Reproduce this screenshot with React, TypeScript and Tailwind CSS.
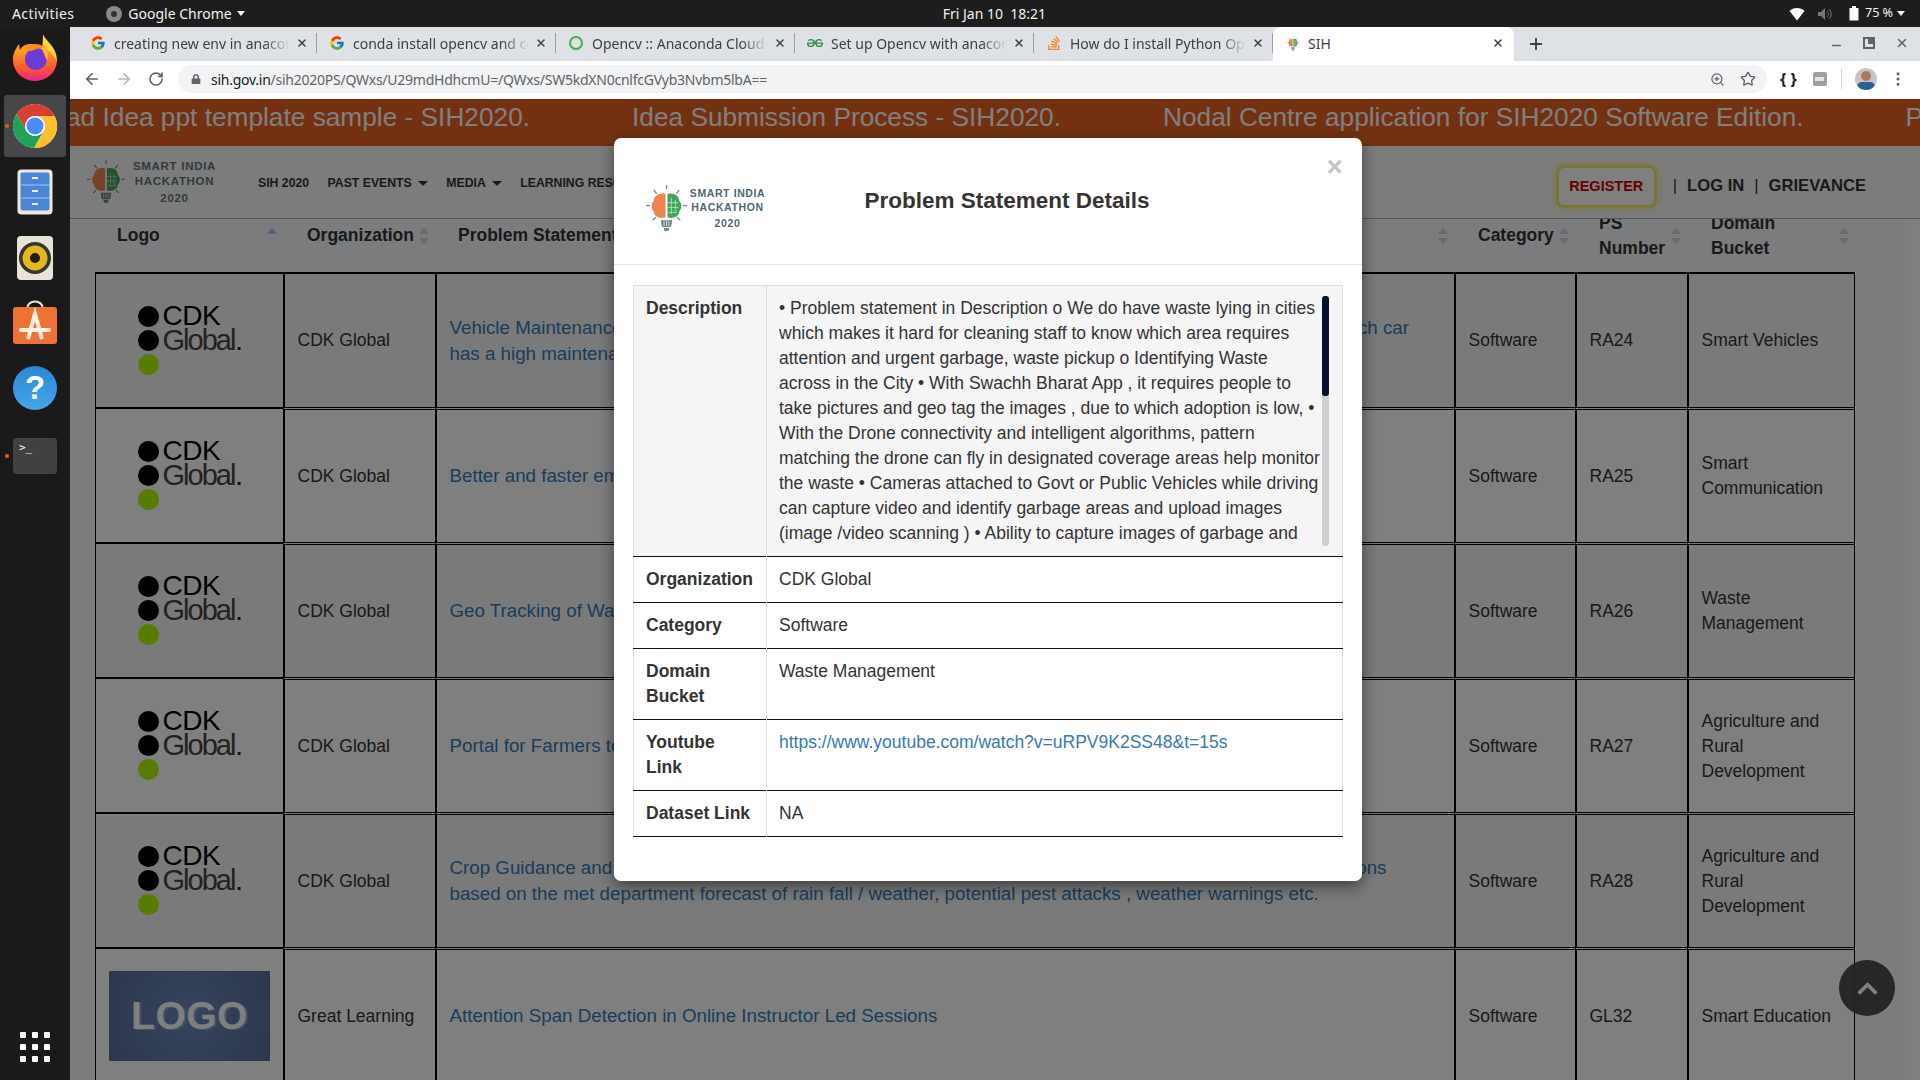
import { ArrowLeft, ArrowRight, EllipsisVertical, Minus, Plus, RotateCw, Star, X, ZoomIn } from "lucide-react";
import { FaChevronUp, FaLock, FaStackOverflow } from "react-icons/fa";
import { FcGoogle } from "react-icons/fc";
import { SiGeeksforgeeks } from "react-icons/si";

const sans = "font-['Liberation_Sans',Arial,sans-serif]";
const ui = "font-['Noto_Sans',sans-serif]";

const description =
  "• Problem statement in Description o We do have waste lying in cities which makes it hard for cleaning staff to know which area requires attention and urgent garbage, waste pickup o Identifying Waste across in the City • With Swachh Bharat App , it requires people to take pictures and geo tag the images , due to which adoption is low, • With the Drone connectivity and intelligent algorithms, pattern matching the drone can fly in designated coverage areas help monitor the waste • Cameras attached to Govt or Public Vehicles while driving can capture video and identify garbage areas and upload images (image /video scanning ) • Ability to capture images of garbage and send them to the municipal teams for a quick response.";

const rows = [
  {
    org: "CDK Global",
    title: ["Vehicle Maintenance is a costly affair and every vehicle owner wants to know well in advance of purchase which car", "has a high maintenance cost over the years"],
    ps: "RA24",
    domain: "Smart Vehicles",
  },
  { org: "CDK Global", title: ["Better and faster emergency response for road accidents"], ps: "RA25", domain: "Smart Communication" },
  { org: "CDK Global", title: ["Geo Tracking of Waste and triggering alerts"], ps: "RA26", domain: "Waste Management" },
  { org: "CDK Global", title: ["Portal for Farmers to sell their produce"], ps: "RA27", domain: "Agriculture and Rural Development" },
  {
    org: "CDK Global",
    title: ["Crop Guidance and advisory for farmers through the app that can send timely recommendations and notifications", "based on the met department forecast of rain fall / weather, potential pest attacks , weather warnings etc."],
    ps: "RA28",
    domain: "Agriculture and Rural Development",
  },
  { org: "Great Learning", title: ["Attention Span Detection in Online Instructor Led Sessions"], ps: "GL32", domain: "Smart Education", logo: true },
];

function Firefox() {
  return (
    <svg width="46" height="48" viewBox="0 0 46 48">
      <defs>
        <linearGradient id="ff" x1="0.5" y1="0.2" x2="0.5" y2="1">
          <stop offset="0" stopColor="#ff9a1f" />
          <stop offset="0.55" stopColor="#ff5a2b" />
          <stop offset="1" stopColor="#e8218f" />
        </linearGradient>
      </defs>
      <path d="M31 0c2 7 14 12 14 27H30z" fill="#ffd93b" />
      <path d="M1 25c0-6 3-11 6-15l1 6c2-4 6-6 10-6 6 0 20 3 27 17a22 21 0 0 1-44-2z" fill="url(#ff)" />
      <circle cx="24" cy="25" r="11" fill="#6d3bd6" />
      <path d="M12 14c5-5 17-6 22 1-5-2-9-1-12 1-4 2-7 1-10-2z" fill="#ff8a1e" />
      <path d="M31 9c4 4 6 10 4 18l-5-12z" fill="#ffb52e" />
    </svg>
  );
}

function Chrome({ size }: { size: number }) {
  const wedge = "M24 14H43.6A22 22 0 0 0 5.54 12.03L15.34 29A10 10 0 0 1 24 14Z";
  return (
    <svg width={size} height={size} viewBox="0 0 48 48">
      <circle cx="24" cy="24" r="22" fill="#fff" />
      <path d={wedge} fill="#d93f33" />
      <path d={wedge} fill="#fbc02d" transform="rotate(120 24 24)" />
      <path d={wedge} fill="#1fa25a" transform="rotate(-120 24 24)" />
      <circle cx="24" cy="24" r="8.5" fill="#4b8bf5" />
    </svg>
  );
}

function FilesIcon() {
  return (
    <svg width="36" height="46" viewBox="0 0 36 46">
      <rect x="0.5" y="0.5" width="35" height="45" rx="4" fill="#ece8dc" />
      <rect x="3.5" y="3.5" width="29" height="38" rx="2" fill="#4a86d8" />
      <path d="M3.5 16H32.5M3.5 29H32.5" stroke="#a9c6ee" />
      <path d="M15 9h6M15 22h6M15 35h6" stroke="#f2f2f2" strokeWidth="2" />
    </svg>
  );
}

function RhythmboxIcon() {
  return (
    <svg width="36" height="44" viewBox="0 0 36 44">
      <rect width="36" height="44" rx="4" fill="#e7e3d8" />
      <circle cx="18" cy="22" r="16" fill="#37352f" />
      <circle cx="18" cy="22" r="12.5" fill="#e4b71e" />
      <circle cx="18" cy="22" r="5" fill="#1e1d1a" />
    </svg>
  );
}

function SoftwareIcon() {
  return (
    <svg width="44" height="46" viewBox="0 0 44 46">
      <path d="M14 10c0-10 16-10 16 0" fill="none" stroke="#f0e3d0" strokeWidth="2" />
      <rect y="8" width="44" height="37" rx="3" fill="#ee7136" />
      <path d="M15 40L22 15L29 40" fill="none" stroke="#fdf1e6" strokeWidth="4" />
      <path d="M8 31H36" stroke="#fdf1e6" strokeWidth="4" strokeLinecap="round" />
    </svg>
  );
}

function BrainLogo({ className }: { className: string }) {
  return (
    <svg className={className} viewBox="0 0 42 48" fill="none">
      <path d="M20 9C12 7 8 12 8 16c-3 3-3 8 0 11 0 5 6 8 12 6z" fill="#ee8451" />
      <path d="M22 9c8-2 12 3 12 7 3 3 3 8 0 11 0 5-6 8-12 6z" fill="#3fa65a" />
      <path d="M26 13v17M30 15v13M22 18h11M22 23h11M22 28h10" stroke="#bfe6c6" strokeWidth="0.8" />
      <path d="M21 0v4M8 5l3 4M34 5l-3 4M0 21h4M38 21h4M7 36l3-3M35 36l-3-3" stroke="#71838b" strokeWidth="1.3" />
      <path d="M15 36h12l-1.5 7h-9zM18 44h6l-1 3h-4z" fill="#71838b" />
      <path d="M18.5 37v5M21 37v5M23.5 37v5" stroke="#fff" strokeWidth="0.7" />
    </svg>
  );
}

function CdkLogo() {
  return (
    <div className="ml-[2px] flex w-[106px] gap-[4px]">
      <div className="flex flex-col gap-[3px]">
        <span className="size-[21px] rounded-full bg-black" />
        <span className="size-[21px] rounded-full bg-black" />
        <span className="size-[21px] rounded-full bg-[#b0f800]" />
      </div>
      <div className="-mt-[2px] flex flex-col">
        <span className="h-[24px] text-[28px] leading-[24px] tracking-[-0.5px] text-black">CDK</span>
        <span className="whitespace-nowrap text-[29px] leading-[24px] tracking-[-2px] text-[#444]">
          Global<span className="ml-[2px] text-[20px] font-bold tracking-normal text-[#222]">.</span>
        </span>
      </div>
    </div>
  );
}

function PlaceholderLogo() {
  return (
    <div className="mx-auto flex h-[90px] w-[161px] items-center justify-center bg-[radial-gradient(circle,#6c88bc_0%,#5a6f98_100%)]">
      <span className="text-[39px] font-bold tracking-[0.5px] text-[#fff] [text-shadow:2px_1px_0_#8ea2c8]">LOGO</span>
    </div>
  );
}

function SortArrows() {
  return (
    <svg className="absolute right-[6px] top-[17px]" width="10" height="18" viewBox="0 0 10 18">
      <path d="M0 7L5 0L10 7Z" fill="#d4d4d4" />
      <path d="M0 11L5 18L10 11Z" fill="#d4d4d4" />
    </svg>
  );
}

function SortArrowsUp() {
  return (
    <svg className="absolute right-[6px] top-[17px]" width="10" height="8" viewBox="0 0 10 8">
      <path d="M0 7L5 0L10 7Z" fill="#b8b8ff" />
    </svg>
  );
}

function TopBar() {
  return (
    <div className={`relative flex h-[27px] shrink-0 items-center bg-[#1d1d1d] text-[14px] text-[#f2f2f2] ${ui}`}>
      <span className="ml-[12px] tracking-[0.4px]">Activities</span>
      <span className="ml-[32px] flex size-[16px] items-center justify-center rounded-full bg-[#8a8a8a]">
        <span className="size-[6px] rounded-full bg-[#333]" />
      </span>
      <span className="ml-[6px]">Google Chrome</span>
      <span className="ml-[5px] h-0 w-0 border-x-[4.5px] border-t-[5px] border-x-transparent border-t-[#f2f2f2]" />
      <span className="ml-[698px]">Fri Jan 10&nbsp; 18:21</span>
      <div className="ml-auto mr-[15px] flex items-center text-[12.5px]">
        <svg width="16" height="14" viewBox="0 0 16 14">
          <path d="M0.5 4C4 0 12 0 15.5 4L8 13.5Z" fill="#fff" />
        </svg>
        <svg className="ml-[12px]" width="16" height="14" viewBox="0 0 16 14">
          <path d="M1 5h3l4-4v12l-4-4H1z" fill="#777" />
          <path d="M10 4c2 2 2 4 0 6M12 2c3 3 3 7 0 10" stroke="#777" fill="none" />
        </svg>
        <svg className="ml-[16px]" width="10" height="15" viewBox="0 0 10 15">
          <rect x="3" width="4" height="2" fill="#fff" />
          <rect x="0.5" y="2" width="9" height="12.5" fill="#fff" />
        </svg>
        <span className="ml-[6px]">75 %</span>
        <span className="ml-[4px] h-0 w-0 border-x-[4.5px] border-t-[5px] border-x-transparent border-t-[#f2f2f2]" />
      </div>
    </div>
  );
}

function Dock() {
  return (
    <div className="relative flex w-[70px] shrink-0 flex-col items-center bg-[#1b1a1a]">
      <span className="absolute left-[5px] top-[97px] size-[4px] rounded-full bg-[#e9541f]" />
      <span className="absolute left-[5px] top-[427px] size-[4px] rounded-full bg-[#e9541f]" />
      <div className="mb-[6px] flex h-[62px] items-center">
        <Firefox />
      </div>
      <div className="flex h-[62px] w-[62px] items-center justify-center rounded-[3px] bg-[#47474a]">
        <Chrome size={48} />
      </div>
      <div className="mt-[2px] flex h-[66px] items-center">
        <FilesIcon />
      </div>
      <div className="flex h-[66px] items-center">
        <RhythmboxIcon />
      </div>
      <div className="flex h-[66px] items-center">
        <span className="-mt-[4px]">
          <SoftwareIcon />
        </span>
      </div>
      <div className="mb-[4px] flex h-[62px] items-center">
        <span className={`flex size-[44px] items-center justify-center rounded-full bg-[linear-gradient(#2a87d8,#46a6e6)] text-[33px] font-bold text-white ${sans}`}>?</span>
      </div>
      <div className="flex h-[66px] items-center">
        <span className="h-[36px] w-[44px] rounded-[3px] bg-[#414141] pl-[6px] font-['DejaVu_Sans_Mono',monospace] text-[11px] leading-[20px] text-white">&gt;_</span>
      </div>
      <div className="mb-[18px] mt-auto grid grid-cols-3 gap-[6px]">
        {Array.from({ length: 9 }).map((_, i) => (
          <span key={i} className="size-[6px] rounded-[1px] bg-white" />
        ))}
      </div>
    </div>
  );
}

const tabs = [
  { icon: <FcGoogle size={16} />, title: "creating new env in anaconda python" },
  { icon: <FcGoogle size={16} />, title: "conda install opencv and conda" },
  { icon: <span className="block size-[14px] rounded-full border-[2.5px] border-[#43b049]" />, title: "Opencv :: Anaconda Cloud" },
  { icon: <SiGeeksforgeeks size={16} color="#2f8d46" />, title: "Set up Opencv with anaconda" },
  { icon: <FaStackOverflow size={16} color="#f48024" />, title: "How do I install Python OpenCV" },
];

function TabBar() {
  return (
    <div className={`flex h-[34px] shrink-0 items-end bg-[#dee1e6] pl-[8px] text-[14px] ${ui}`}>
      {tabs.map((tab) => (
        <div key={tab.title} className="flex h-[34px] w-[239px] items-center pb-[2px] pl-[12px] text-[#3c4043]">
          <span className="flex w-[16px] shrink-0 justify-center">{tab.icon}</span>
          <span className="ml-[8px] w-[176px] overflow-hidden whitespace-nowrap [mask-image:linear-gradient(to_right,black_85%,transparent)]">{tab.title}</span>
          <X className="ml-[6px] shrink-0 text-[#3c4043]" size={12} strokeWidth={3} />
          <span className="ml-auto h-[20px] w-px bg-[#9aa0a6]" />
        </div>
      ))}
      <div className="flex h-[34px] w-[241px] items-center rounded-t-[8px] bg-white pb-[2px] pl-[13px] pr-[10px] text-[#3c4043]">
        <BrainLogo className="h-[15px] w-[14px]" />
        <span className="ml-[8px]">SIH</span>
        <X className="ml-auto" size={12} strokeWidth={3} />
      </div>
      <Plus className="mb-[8px] ml-[13px] text-[#3c4043]" size={18} strokeWidth={2.5} />
      <div className="mb-[9px] ml-auto mr-[11px] flex items-center gap-[20px] text-[#5f6368]">
        <Minus size={13} strokeWidth={3} className="mt-[6px]" />
        <span className="relative size-[12px] border-[2px] border-[#5f6368]">
          <span className="absolute -right-[2px] -top-[2px] size-[7px] bg-[#5f6368]" />
        </span>
        <X size={14} strokeWidth={2.5} />
      </div>
    </div>
  );
}

function Toolbar() {
  return (
    <div className={`flex h-[38px] shrink-0 items-center bg-white pb-[2px] text-[#5f6368] ${ui}`}>
      <ArrowLeft className="ml-[13px]" size={18} strokeWidth={2.2} />
      <ArrowRight className="ml-[14px] text-[#b5b8bb]" size={18} strokeWidth={2.2} />
      <RotateCw className="ml-[15px]" size={16} strokeWidth={2.4} />
      <div className="ml-[14px] flex h-[28px] w-[1589px] items-center rounded-full bg-[#f1f3f4] pr-[11px]">
        <FaLock className="ml-[13px]" size={10} />
        <span className="ml-[10px] text-[14px] tracking-[-0.25px]">
          <span className="text-[#202124]">sih.gov.in</span>/sih2020PS/QWxs/U29mdHdhcmU=/QWxs/SW5kdXN0cnlfcGVyb3Nvbm5lbA==
        </span>
        <ZoomIn className="ml-auto" size={15} />
        <Star className="ml-[15px]" size={16} />
      </div>
      <span className="ml-[13px] text-[16px] font-bold text-[#222]">{"{ }"}</span>
      <span className="ml-[16px] flex h-[14px] w-[14px] items-center justify-center rounded-[2px] bg-[#9aa0a6]">
        <span className="h-[4px] w-[9px] bg-[#e4e4e4]" />
      </span>
      <span className="ml-[14px] h-[20px] w-px bg-[#d5d5d5]" />
      <span className="relative ml-[13px] size-[22px] overflow-hidden rounded-full bg-[#c8c4bd]">
        <span className="absolute left-[6px] top-[3px] size-[10px] rounded-full bg-[#a77b5e]" />
        <span className="absolute left-[2px] top-[14px] h-[10px] w-[18px] rounded-t-[5px] bg-[#2a5f9e]" />
      </span>
      <EllipsisVertical className="ml-[12px]" size={18} />
    </div>
  );
}

function PageBehind() {
  return (
    <div className={`flex h-full flex-col bg-[#f6f9fc] ${sans}`}>
      <div className="flex h-[47px] shrink-0 items-center gap-[102px] overflow-hidden whitespace-nowrap bg-[#e66225] pb-[10px] text-[26.25px] text-white">
        <span className="-ml-[4px]">ad Idea ppt template sample - SIH2020.</span>
        <span>Idea Submission Process - SIH2020.</span>
        <span>Nodal Centre application for SIH2020 Software Edition.</span>
        <span>Participate in SIH2020.</span>
      </div>
      <div className="relative z-10 flex h-[73px] shrink-0 items-center border-b border-[#aaa] bg-[#f8f8f8] pl-[17px] pr-[41px]">
        <BrainLogo className="h-[50px] w-[38px]" />
        <div className="ml-[8px] flex w-[83px] flex-col items-center font-bold text-[#5f7680]">
          <span className="whitespace-nowrap text-[11.5px] leading-[15px] tracking-[0.7px]">SMART INDIA</span>
          <span className="whitespace-nowrap text-[11.5px] leading-[15px] tracking-[0.7px]">HACKATHON</span>
          <span className="mt-[2px] text-[11.5px] leading-[15px] tracking-[0.7px]">2020</span>
        </div>
        <nav className="ml-[42px] mt-[2px] flex items-center gap-[18.5px] whitespace-nowrap text-[12.25px] font-bold text-[#333]">
          <span>SIH 2020</span>
          <span className="flex items-center gap-[6px]">
            PAST EVENTS <span className="h-0 w-0 border-x-[5px] border-t-[5px] border-x-transparent border-t-[#333]" />
          </span>
          <span className="flex items-center gap-[6px]">
            MEDIA <span className="h-0 w-0 border-x-[5px] border-t-[5px] border-x-transparent border-t-[#333]" />
          </span>
          <span>LEARNING RESOURCES</span>
        </nav>
        <div className="ml-auto mr-[13px] mt-[9px] flex items-center whitespace-nowrap text-[16.6px] font-bold text-[#333]">
          <span className="flex h-[43px] w-[101px] items-center justify-center rounded-[8px] border-[3px] border-[#f4e76e] bg-white text-[14.5px] text-[#cc0000] shadow-[0_0_6px_#f4e76e]">REGISTER</span>
          <span className="ml-[16px] font-normal">|</span>
          <span className="ml-[10px]">LOG IN</span>
          <span className="ml-[10px] font-normal">|</span>
          <span className="ml-[10px]">GRIEVANCE</span>
        </div>
      </div>
      <div className="relative flex min-h-0 flex-1">
        <div className="min-w-0 flex-1 overflow-hidden pl-[25px]">
          <table className="-mt-[9px] w-[1760px] table-fixed border-separate border-spacing-0 text-[17.5px] leading-[25px] text-[#333]">
            <colgroup>
              <col className="w-[188px]" />
              <col className="w-[152px]" />
              <col className="w-[1019px]" />
              <col className="w-[121px]" />
              <col className="w-[112px]" />
              <col className="w-[168px]" />
            </colgroup>
            <thead>
              <tr className="h-[62px] text-left font-bold">
                <th className="relative pb-[11px] pl-[22px] pr-[20px] font-bold">Logo<SortArrowsUp /></th>
                <th className="relative pb-[11px] pl-[24px] pr-[20px] font-bold">Organization<SortArrows /></th>
                <th className="relative pb-[11px] pl-[23px] pr-[20px] font-bold">Problem Statement<SortArrows /></th>
                <th className="relative pb-[11px] pl-[24px] pr-[20px] font-bold">Category<SortArrows /></th>
                <th className="relative pb-[11px] pl-[24px] pr-[20px] font-bold">PS Number<SortArrows /></th>
                <th className="relative pb-[11px] pl-[24px] pr-[40px] font-bold">Domain Bucket<SortArrows /></th>
              </tr>
            </thead>
            <tbody>
              {rows.map((row, i) => {
                const top = i === 0 ? "border-t-2" : "border-t-[3px] border-double";
                const cell = `h-[135px] border-l-2 border-black px-[12.5px] ${top} ${i % 2 === 0 ? "bg-[#f5f5f5]" : "bg-white"}`;
                return (
                  <tr key={row.ps}>
                    <td className={`h-[135px] border-l border-t-2 border-black ${i % 2 === 0 ? "bg-[#f5f5f5]" : "bg-white"}`}>
                      {row.logo ? (
                        <PlaceholderLogo />
                      ) : (
                        <div className="flex justify-center">
                          <CdkLogo />
                        </div>
                      )}
                    </td>
                    <td className={cell}>{row.org}</td>
                    <td className={`${cell} whitespace-nowrap text-[18.75px] leading-[26px] text-[#337ab7]`}>
                      {row.title.map((line) => (
                        <div key={line}>{line}</div>
                      ))}
                    </td>
                    <td className={cell}>Software</td>
                    <td className={cell}>{row.ps}</td>
                    <td className={`${cell} border-r`}>{row.domain}</td>
                  </tr>
                );
              })}
            </tbody>
          </table>
        </div>
        <div className="w-[15px] shrink-0 bg-white" />
        <span className="absolute left-[1769px] top-[741px] flex size-[56px] items-center justify-center rounded-full bg-[#444]/95 text-white">
          <FaChevronUp size={23} />
        </span>
      </div>
    </div>
  );
}

function Modal() {
  const th = "border-t border-t-[#111] border-r border-r-[#ddd] px-[12.5px] py-[10px] align-top font-bold text-left";
  const td = "border-t border-t-[#111] px-[12.5px] py-[10px] align-top";
  return (
    <div className={`relative h-[743px] w-[748px] rounded-[7px] bg-white text-[17.5px] leading-[25px] text-[#333] shadow-[0_5px_15px_rgba(0,0,0,0.5)] ${sans}`}>
      <div className="flex h-[127px] items-start border-b border-[#e5e5e5] pl-[32px]">
        <div className="mt-[47px] flex w-[120px] items-start">
          <BrainLogo className="h-[47px] w-[41px]" />
          <div className="ml-[3px] mt-[1px] flex w-[76px] flex-col items-center font-bold text-[#4f6570]">
            <span className="whitespace-nowrap text-[10.5px] leading-[14px] tracking-[0.6px]">SMART INDIA</span>
            <span className="whitespace-nowrap text-[10.5px] leading-[14px] tracking-[0.6px]">HACKATHON</span>
            <span className="mt-[2px] text-[10.5px] leading-[15px] tracking-[0.6px]">2020</span>
          </div>
        </div>
        <h4 className="ml-[99px] mt-[50px] text-[22.5px] font-bold leading-[26px] text-[#333]">Problem Statement Details</h4>
        <span className="absolute right-[19px] top-[14px] text-[27px] font-bold leading-[30px] text-[#c4c4c4]">×</span>
      </div>
      <div className="px-[19px] pt-[20px]">
        <table className="w-[710px] table-fixed border-collapse border-x border-[#ddd]">
          <colgroup>
            <col className="w-[133px]" />
            <col />
          </colgroup>
          <tbody>
            <tr className="bg-[#f5f5f5]">
              <th className="border-r border-t border-[#ddd] px-[12.5px] py-[10px] text-left align-top font-bold">Description</th>
              <td className="border-t border-[#ddd] px-[12.5px] py-[10px] align-top">
                <div className="relative h-[250px] overflow-hidden pr-[8px]">
                  {description}
                  <span className="absolute right-0 top-0 h-[250px] w-[7px] rounded-[3px] bg-[#d0d0d0]" />
                  <span className="absolute right-0 top-0 h-[100px] w-[7px] rounded-[3px] bg-[#04102e]" />
                </div>
              </td>
            </tr>
            <tr>
              <th className={th}>Organization</th>
              <td className={td}>CDK Global</td>
            </tr>
            <tr>
              <th className={th}>Category</th>
              <td className={td}>Software</td>
            </tr>
            <tr>
              <th className={th}>Domain Bucket</th>
              <td className={td}>Waste Management</td>
            </tr>
            <tr>
              <th className={th}>Youtube Link</th>
              <td className={td}>
                <span className="text-[#337ab7]">https://www.youtube.com/watch?v=uRPV9K2SS48&amp;t=15s</span>
              </td>
            </tr>
            <tr className="border-b border-[#111]">
              <th className={th}>Dataset Link</th>
              <td className={td}>NA</td>
            </tr>
          </tbody>
        </table>
      </div>
    </div>
  );
}

export default function App() {
  return (
    <div className="flex h-screen w-screen flex-col overflow-hidden">
      <TopBar />
      <div className="flex min-h-0 flex-1">
        <Dock />
        <div className="flex min-w-0 flex-1 flex-col">
          <TabBar />
          <Toolbar />
          <div className="relative min-h-0 flex-1 overflow-hidden">
            <PageBehind />
            <div className="absolute inset-0 z-20 flex items-start justify-center bg-black/50 pr-[15px] pt-[39px]">
              <Modal />
            </div>
          </div>
        </div>
      </div>
    </div>
  );
}
